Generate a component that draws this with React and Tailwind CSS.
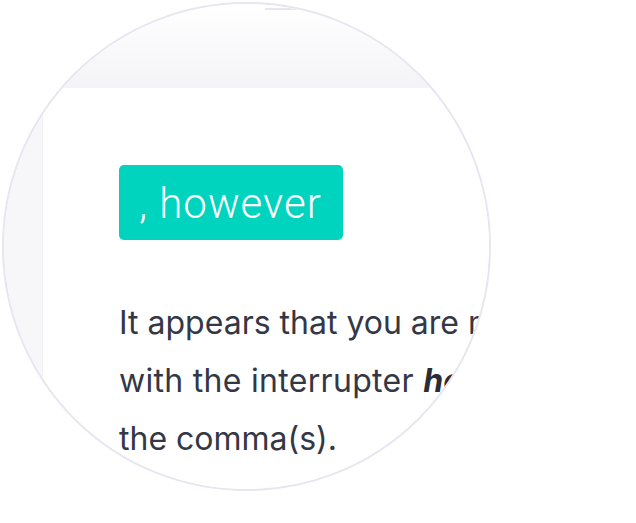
import React from 'react';

export default function App() {
  return (
    <div className="w-[636px] h-[523px] bg-white overflow-hidden">
      {/* Magnifier lens */}
      <div className="ml-[2px] mt-[2px] w-[489px] h-[489px] rounded-full border-2 border-[#e6e6f0] overflow-hidden flex flex-col bg-white">
        {/* Top bar */}
        <div className="h-[84px] shrink-0 bg-gradient-to-b from-white to-[#f4f4f8]">
          <div className="mt-[4px] ml-[261px] w-[40px] h-[2px] bg-[#e6e6ee]" />
        </div>

        <div className="flex flex-1">
          {/* Left rail */}
          <div className="w-[39px] shrink-0 bg-[#f7f7fa] border-r border-[#f0f0f5]" />

          {/* Card */}
          <div className="flex-1 bg-white pl-[76px] pt-[77px]">
            <div className="flex items-center h-[75px] w-[224px] pl-[20px] pt-[2px] rounded-[5px] bg-[#00d3be]">
              <span
                className="text-white text-[42px] font-light tracking-[1px] leading-none"
                style={{ fontFamily: 'Roboto, "Liberation Sans", sans-serif' }}
              >
                , however
              </span>
            </div>

            <div
              className="mt-[54px] text-[32px] leading-[58px] text-[#343745] whitespace-nowrap"
              style={{ fontFamily: 'Inter, "Liberation Sans", sans-serif' }}
            >
              <div>It appears that you are missing a comma before</div>
              <div className="tracking-[0.3px]">
                with the interrupter <b className="italic font-bold text-[#2a2c38]">however</b>. Consider adding
              </div>
              <div>the comma(s).</div>
            </div>
          </div>
        </div>
      </div>
    </div>
  );
}
